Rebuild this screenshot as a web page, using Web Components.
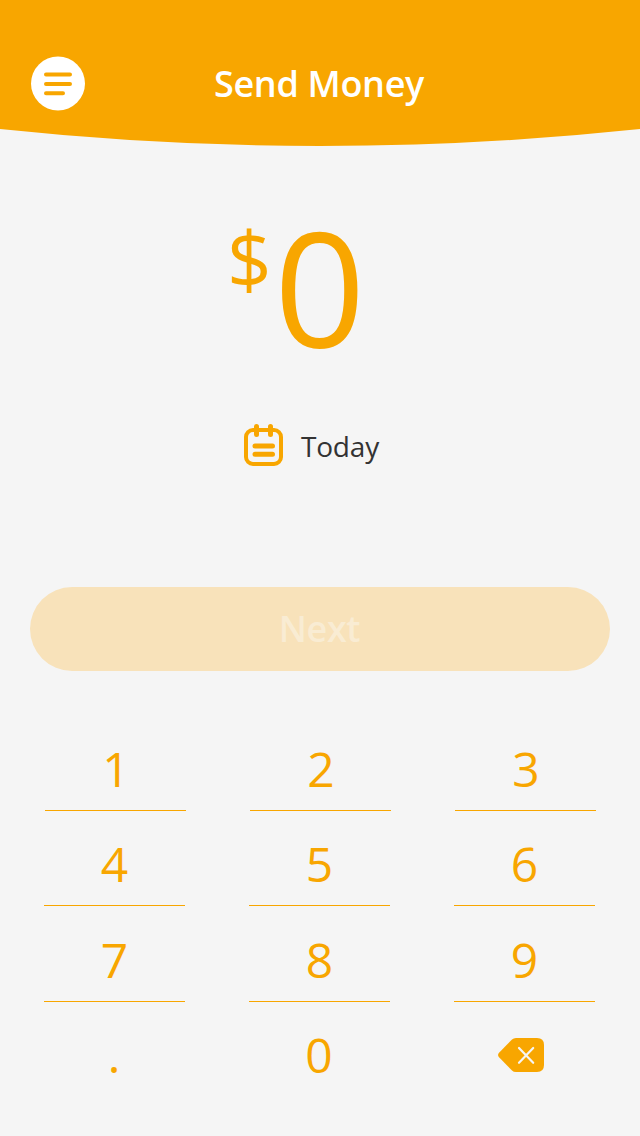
<!DOCTYPE html>
<html lang="en"><head><meta charset="utf-8"><title>Send Money</title>
<style>body{margin:0;background:#f5f5f5;font-family:"Open Sans",sans-serif}</style></head>
<body><send-money-app></send-money-app>
<script>
const define=(name,html)=>customElements.define(name,class extends HTMLElement{
  connectedCallback(){
    if(this.shadowRoot)return;
    const t=document.createElement('template');t.innerHTML=html;
    this.attachShadow({mode:'open'}).append(t.content.cloneNode(true));
  }
});
define('app-header',`<style>
:host{display:block;height:146px;position:relative;color:#fff}
.bg{position:absolute;inset:0;display:block}
.bar{position:relative;display:grid;grid-template-columns:54px 1fr 54px;align-items:start;padding:56px 31px 0}
.menu{display:block}
h1{margin:0;padding-right:2px;text-align:center;font-size:36px;line-height:56px;font-weight:600;letter-spacing:-.3px}
</style>
<svg class="bg" width="640" height="146"><path d="M0 0H640V129Q320 163 0 129Z" fill="#f8a600"/></svg>
<div class="bar"><svg class="menu" width="54" height="55" viewBox="0 0 54 55"><circle cx="27" cy="27.500" r="27" fill="#fff"/><path d="M15 18.500H39M15 27.900H39M15 37.200H32" stroke="#f8a600" stroke-width="4" stroke-linecap="round"/></svg><h1><slot></slot></h1></div>`);
define('amount-display',`<style>
:host{display:flex;align-items:flex-start;color:#f8a600;height:270px;box-sizing:border-box;padding:30px 0 0 227px}
.c{font-size:78px;line-height:106px;margin-top:30px;width:47px}
.v{font-size:160px;line-height:218px}
</style><span class="c">$</span><span class="v"><slot></slot></span>`);
define('date-picker',`<style>
:host{display:flex;align-items:center;height:60px;padding-left:243px;gap:17px;color:#333;font-size:28px;line-height:40px;letter-spacing:-.2px}
svg{display:block;margin-bottom:4px}
</style><svg width="41" height="44" viewBox="0 0 41 44" fill="none" stroke="#f8a600" stroke-linecap="round"><rect x="3" y="8" width="35" height="34" rx="7" stroke-width="4"/><path d="M13.500 4.500V12.500M27.500 4.500V12.500M12 24H29.500M12 32.300H29.500" stroke-width="5"/></svg><span><slot></slot></span>`);
define('primary-button',`<style>
:host{display:block;padding:0 30px}
button{display:block;width:100%;height:84px;border:0;border-radius:42px;background:#f8e2ba;color:#f9ecd3;font:600 36px/84px "Open Sans",sans-serif;padding:0 1px 0 0;letter-spacing:-.4px}
</style><button disabled><slot></slot></button>`);
define('keypad-key',`<style>
:host{display:block;height:75px;border-bottom:1px solid var(--line);color:#f8a600;font-size:48px;line-height:66px;text-align:center;box-sizing:border-box;padding:var(--nudge,0)}
</style><slot></slot>`);
define('key-pad',`<style>
:host{display:grid;grid-auto-rows:95.333px;--line:#f8a600}
.row{display:grid;grid-template-columns:repeat(3,141px);column-gap:64px;padding-left:44px}
.first{padding-left:45px;--nudge:0 0 0 1px}
.last{--line:transparent;--nudge:0 1px 0 0}
svg{display:block;margin:16px 0 0 44px}
</style>
<div class="row first"><keypad-key>1</keypad-key><keypad-key>2</keypad-key><keypad-key>3</keypad-key></div>
<div class="row"><keypad-key>4</keypad-key><keypad-key>5</keypad-key><keypad-key>6</keypad-key></div>
<div class="row"><keypad-key>7</keypad-key><keypad-key>8</keypad-key><keypad-key>9</keypad-key></div>
<div class="row last"><keypad-key>.</keypad-key><keypad-key>0</keypad-key><keypad-key><svg width="46" height="34" viewBox="0 0 46 34"><path d="M18 0H39Q46 0 46 7V27Q46 34 39 34H18Q15.500 34 14 32.500L.8 19Q-.7 17 .8 15L14 1.500Q15.500 0 18 0Z" fill="#f8a600"/><path d="M21 10L35.200 24.800M35.200 10L21 24.800" stroke="#f5f5f5" stroke-width="2.200" stroke-linecap="round"/></svg></keypad-key></div>`);
define('send-money-app',`<style>
:host{display:flex;flex-direction:column;height:1136px;overflow:hidden}
date-picker{box-sizing:border-box}primary-button{margin-top:111px}key-pad{margin-top:65px}
</style><app-header>Send Money</app-header><amount-display>0</amount-display><date-picker>Today</date-picker><primary-button>Next</primary-button><key-pad></key-pad>`);
</script></body></html>
